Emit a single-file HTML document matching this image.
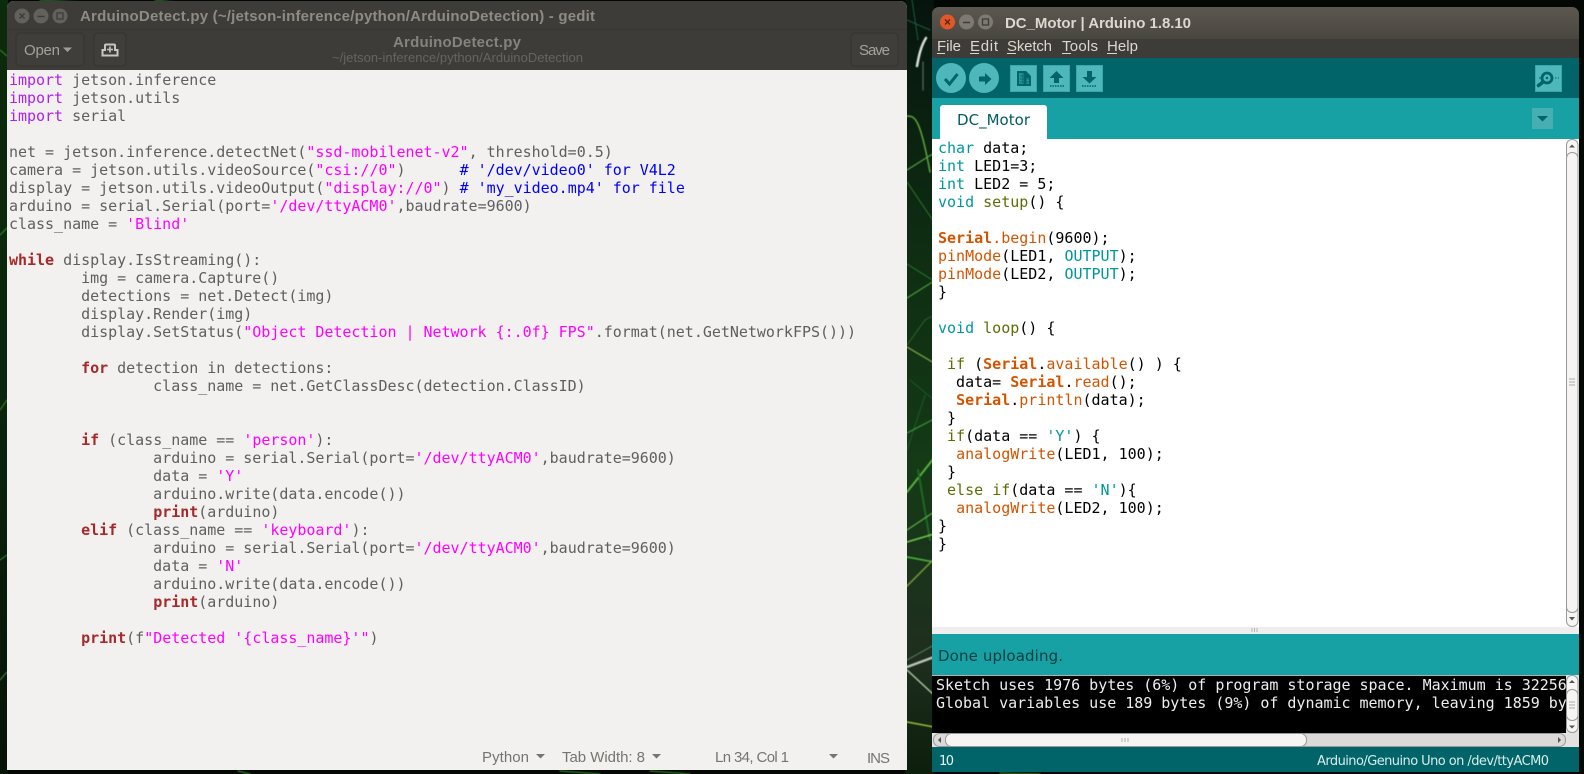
<!DOCTYPE html>
<html><head><meta charset="utf-8"><style>
html,body{margin:0;padding:0;width:1584px;height:774px;overflow:hidden;background:#050a06}
div,pre,svg{position:absolute}
pre{margin:0;font:15px/18px "DejaVu Sans Mono",monospace;white-space:pre}
#py{left:9px;top:71px;color:#5f5f5f;letter-spacing:-.02px}
#py .k{color:#a52a2a;font-weight:bold}
#py .i{color:#b020f0}
#py .s{color:#ff00ff}
#py .c{color:#0000ff}
#ino{left:938px;top:139px;color:#000}
#ino .t{color:#00979c}
#ino .f{color:#5e6d03}
#ino .o{color:#d35400}
#ino .b{color:#d35400;font-weight:bold}
#ino .s{color:#00979c}
</style></head><body>
<svg style="left:0;top:0" width="1584" height="774" viewBox="0 0 1584 774">
<defs>
<linearGradient id="bg" x1="0" y1="0" x2="0" y2="1"><stop offset="0" stop-color="#06140e"/><stop offset=".3" stop-color="#0e2c12"/><stop offset=".6" stop-color="#143a16"/><stop offset=".85" stop-color="#1f2e1f"/><stop offset="1" stop-color="#0c1e0c"/></linearGradient>
<linearGradient id="lb" x1="0" y1="0" x2="0" y2="1"><stop offset="0" stop-color="#0c2a0c"/><stop offset=".5" stop-color="#0a260c"/><stop offset="1" stop-color="#061406"/></linearGradient>
<filter id="soft" x="-10%" y="-10%" width="120%" height="120%"><feGaussianBlur stdDeviation=".6"/></filter>
</defs>
<rect width="1584" height="774" fill="#040804"/>
<rect x="0" width="8" height="774" fill="url(#lb)"/>
<rect x="905" width="29" height="774" fill="url(#bg)"/>
<g fill="none" stroke-linecap="round" filter="url(#soft)">
<path d="M917 66C919 55 921 46 926 38" stroke="#d8e0d8" stroke-width="2.5"/>
<path d="M923 90V62" stroke="#46604e" stroke-width="1.5"/>
<path d="M907 20L930 30M912 0L918 40" stroke="#1f5a3a" stroke-width="1"/>
<path d="M907 116C915 116 920 118 930 172" stroke="#5fa83e" stroke-width="1.5"/>
<path d="M907 170L934 153" stroke="#58a040" stroke-width="1.2"/>
<path d="M907 182L934 222" stroke="#2e7a2a" stroke-width="1"/>
<path d="M907 264L934 281" stroke="#2f7a2a" stroke-width="1"/>
<path d="M907 298L934 281" stroke="#4c9c38" stroke-width="1.2"/>
<path d="M907 345L925 320L934 315" stroke="#2a6a26" stroke-width="1"/>
<path d="M907 347L934 363" stroke="#8ca848" stroke-width="1.2"/>
<path d="M910 380L934 400M907 450L925 395" stroke="#1f5a28" stroke-width="1"/>
<path d="M907 433L934 419" stroke="#3d9a38" stroke-width="1.2"/>
<path d="M907 492L934 458" stroke="#56b040" stroke-width="2"/>
<path d="M918 470L930 540" stroke="#1f6a24" stroke-width="2"/>
<path d="M907 530L934 512" stroke="#58b040" stroke-width="1.2"/>
<path d="M907 542L934 534" stroke="#6cc850" stroke-width="1.6"/>
<path d="M907 557L934 562" stroke="#4cb83c" stroke-width="1.6"/>
<path d="M907 586L934 559" stroke="#7c9c3c" stroke-width="1.5"/>
<path d="M907 660L934 645" stroke="#5a8a6a" stroke-width="1"/>
<path d="M907 667L934 657" stroke="#b8c6b8" stroke-width="2.5"/>
<path d="M907 670L934 695" stroke="#a8d0a0" stroke-width="1.4"/>
<path d="M907 722L934 727" stroke="#90c030" stroke-width="1.6"/>
<path d="M0 50L7 56M0 235L7 228M0 410L7 400M0 560L7 555M0 680L7 672" stroke="#3a8a30" stroke-width="1"/>
<path d="M40 0L90 3M155 0L180 3M560 771L600 774M650 771L690 774M238 771L250 774M1000 773L1040 774" stroke="#2a7a20" stroke-width="1.2"/>
</g>
<!-- gedit window -->
<path d="M7 770V8a7 7 0 0 1 7-7H900a7 7 0 0 1 7 7V770z" fill="#f2f1f0"/>
<path d="M7 70V8a7 7 0 0 1 7-7H900a7 7 0 0 1 7 7V70z" fill="#3e3c38"/>
<path d="M7 29.5H907" stroke="#383632" stroke-width="1"/>
<circle cx="22" cy="16" r="7.5" fill="#63615c"/><circle cx="41" cy="16" r="7.5" fill="#63615c"/><circle cx="60" cy="16" r="7.5" fill="#63615c"/>
<path d="M19.5 13.5l5 5m0-5l-5 5" stroke="#3e3c38" stroke-width="1.3"/>
<path d="M37.5 16.5h7" stroke="#3e3c38" stroke-width="1.5"/>
<rect x="57" y="13" width="6" height="6" fill="none" stroke="#3e3c38" stroke-width="1.3"/>
<rect x="16" y="33" width="68" height="33" rx="4" fill="#403e3a" stroke="#353330"/>
<rect x="94" y="33" width="32" height="33" rx="4" fill="#403e3a" stroke="#353330"/>
<rect x="851" y="33" width="47" height="33" rx="4" fill="#403e3a" stroke="#353330"/>
<path d="M63 47.5h9l-4.5 4.5z" fill="#a09d96"/>
<path d="M106 44.5h8a1 1 0 0 1 1 1V50h2.5v5.5h-15V50H105v-4.5a1 1 0 0 1 1-1z" fill="none" stroke="#c9c6bf" stroke-width="2"/>
<path d="M110 46.5v6M107 49.5h6" stroke="#c9c6bf" stroke-width="1.6"/>
<g font-family="'Liberation Sans',sans-serif">
<text x="80" y="21" font-size="15" font-weight="bold" fill="#8e8b84" textLength="515" lengthAdjust="spacing">ArduinoDetect.py (~/jetson-inference/python/ArduinoDetection) - gedit</text>
<text x="24" y="55" font-size="15" fill="#a5a29b" textLength="36">Open</text>
<text x="393" y="47" font-size="15" font-weight="bold" fill="#86837c" textLength="128">ArduinoDetect.py</text>
<text x="332" y="62" font-size="13" fill="#66645e" textLength="251">~/jetson-inference/python/ArduinoDetection</text>
<text x="859" y="55" font-size="15" fill="#a5a29b" textLength="31">Save</text>
<g font-size="15" fill="#77746e">
<text x="482" y="762" textLength="47">Python</text>
<text x="562" y="762" textLength="83">Tab Width: 8</text>
<text x="715" y="762" textLength="74">Ln 34, Col 1</text>
<text x="867" y="763" textLength="23">INS</text>
</g>
</g>
<path d="M536 754h9l-4.5 4.5zM652 754h9l-4.5 4.5zM829 754h9l-4.5 4.5z" fill="#77746e"/>
<!-- arduino window -->
<linearGradient id="tb" x1="0" y1="0" x2="0" y2="1"><stop offset="0" stop-color="#5c584f"/><stop offset="1" stop-color="#3e3c38"/></linearGradient>
<path d="M932 58V14a7 7 0 0 1 7-7H1572a7 7 0 0 1 7 7V58z" fill="url(#tb)"/>
<rect x="932" y="39" width="647" height="19" fill="#3e3c38"/>
<circle cx="947.5" cy="22" r="7.5" fill="#e2572a"/><circle cx="966.5" cy="22" r="7.5" fill="#7d7a73"/><circle cx="985.5" cy="22" r="7.5" fill="#7d7a73"/>
<path d="M945 19.5l5 5m0-5l-5 5" stroke="#5a2410" stroke-width="1.3"/>
<path d="M963 22.5h7" stroke="#3e3c38" stroke-width="1.5"/>
<rect x="982.5" y="19" width="6" height="6" fill="none" stroke="#3e3c38" stroke-width="1.3"/>
<rect x="932" y="58" width="647" height="40" fill="#006468"/>
<rect x="932" y="98" width="647" height="41" fill="#17a1a5"/>
<rect x="932" y="139" width="647" height="488" fill="#fff"/>
<rect x="932" y="627" width="647" height="7" fill="#eeeeee"/>
<rect x="932" y="634" width="647" height="41" fill="#17a1a5"/>
<rect x="932" y="675" width="647" height="58" fill="#000"/>
<rect x="932" y="675" width="634" height="1" fill="#b0b0b0"/>
<rect x="932" y="733" width="647" height="14" fill="#e4e2e0"/>
<rect x="932" y="747" width="647" height="25" fill="#006468"/>
<path d="M1252 628v4M1254.5 628v4M1257 628v4" stroke="#b5b5b5"/>
<!-- toolbar icons -->
<circle cx="951" cy="78" r="15" fill="#4db7bb"/><circle cx="984" cy="78" r="15" fill="#4db7bb"/>
<path d="M945 79l4.5 5 8-10" fill="none" stroke="#006468" stroke-width="3"/>
<path d="M979 76.500h6V73l6.500 6-6.500 6v-3.500h-6z" fill="#006468"/>
<g fill="#4db7bb" stroke="#3aa7ab"><rect x="1010.5" y="65.5" width="26" height="26"/><rect x="1043.5" y="65.5" width="26" height="26"/><rect x="1076.5" y="65.5" width="26" height="26"/><rect x="1535.5" y="65.5" width="26" height="26"/></g>
<path d="M1017 71h9l5 5v10h-14z" fill="#006468"/>
<path d="M1019 73h5v11h-5zM1026 78h3v6h-3z" fill="#4db7bb" opacity=".55"/>
<path d="M1020 76h4M1020 79h9M1020 82h9M1023 73v11M1026 77v7" stroke="#006468" stroke-width=".8"/>
<path d="M1056.5 71l7 7h-4.500v5h-5v-5h-4.500z" fill="#006468"/>
<path d="M1050 86h14" stroke="#006468" stroke-width="1.5" stroke-dasharray="1.5 1"/>
<path d="M1087 71h5v6h4.500l-7 6.500-7-6.500h4.500z" fill="#006468"/>
<path d="M1082 86h14" stroke="#006468" stroke-width="1.5" stroke-dasharray="1.5 1"/>
<circle cx="1547" cy="78" r="5" fill="none" stroke="#006468" stroke-width="2.8"/><circle cx="1547" cy="78" r="1.2" fill="#006468"/>
<path d="M1543 82l-4.5 3.500" stroke="#006468" stroke-width="3.5" stroke-linecap="round"/>
<path d="M1539 78h2M1555 78h1.5M1558 78h1" stroke="#006468"/>
<path d="M940 139v-31a3 3 0 0 1 3-3h101a3 3 0 0 1 3 3v31z" fill="#fff"/>
<rect x="1532" y="108" width="21" height="21" fill="#45afb3"/>
<path d="M1537 116h11l-5.500 5.500z" fill="#006468"/>
<!-- editor scrollbar -->
<g fill="#f6f5f4" stroke="#9a9a9a">
<rect x="1566.5" y="139.5" width="11.5" height="24" rx="5.5"/>
<rect x="1566.5" y="602.5" width="11.5" height="24" rx="5.5"/>
<rect x="1566.5" y="152.5" width="11.5" height="460" rx="5.5"/>
</g>
<path d="M1569 147.5h6l-3-3zM1569 617h6l-3 3.5z" fill="#555"/>
<path d="M1569 379h6M1569 382h6M1569 385h6" stroke="#aaa"/>
<!-- console scrollbars -->
<rect x="1566" y="675" width="13" height="58" fill="#e4e2e0"/>
<g fill="#f6f5f4" stroke="#9a9a9a">
<rect x="1566.5" y="675.5" width="11.5" height="57" rx="5.5"/>
<rect x="1566.5" y="689.5" width="11.5" height="31" rx="5.5"/>
<rect x="933.5" y="733.5" width="632" height="13" rx="6" fill="#dcdad8"/>
<rect x="945.5" y="733.5" width="361" height="13" rx="6"/>
</g>
<path d="M1569 683h6l-3-3zM1569 725.5h6l-3 3zM941 737v6l-3-3zM1558 737v6l3-3z" fill="#555"/>
<path d="M1122 738v4M1125 738v4M1128 738v4M1569 702h6M1569 705h6M1569 708h6" stroke="#aaa"/>
<g font-family="'DejaVu Sans',sans-serif">
<text x="957" y="125" font-size="15" fill="#005c5f" textLength="73">DC_Motor</text>
<text x="938" y="661" font-size="15" fill="#003f42" textLength="125">Done uploading.</text>
<text x="939" y="765" font-size="13" fill="#e8f4f4" textLength="15">10</text>
<text x="1317" y="765" font-size="13" fill="#d8ecec" textLength="232">Arduino/Genuino Uno on /dev/ttyACM0</text>
</g>
<g font-family="'Liberation Sans',sans-serif">
<text x="1005" y="28" font-size="15" font-weight="bold" fill="#dcd8cf" textLength="186">DC_Motor | Arduino 1.8.10</text>
<g font-size="15" fill="#dcd8cf">
<text x="937" y="51" textLength="24">File</text>
<text x="970" y="51" textLength="28">Edit</text>
<text x="1007" y="51" textLength="45">Sketch</text>
<text x="1062" y="51" textLength="36">Tools</text>
<text x="1107" y="51" textLength="31">Help</text>
</g>
</g>
<path d="M937 53.5h8M970 53.5h9M1007 53.5h9M1062 53.5h9M1107 53.5h10" stroke="#dcd8cf"/>
</svg>
<pre id="py"><span class="i">import</span> jetson.inference
<span class="i">import</span> jetson.utils
<span class="i">import</span> serial

net = jetson.inference.detectNet(<span class="s">"ssd-mobilenet-v2"</span>, threshold=0.5)
camera = jetson.utils.videoSource(<span class="s">"csi://0"</span>)      <span class="c"># '/dev/video0' for V4L2</span>
display = jetson.utils.videoOutput(<span class="s">"display://0"</span>) <span class="c"># 'my_video.mp4' for file</span>
arduino = serial.Serial(port=<span class="s">'/dev/ttyACM0'</span>,baudrate=9600)
class_name = <span class="s">'Blind'</span>

<span class="k">while</span> display.IsStreaming():
        img = camera.Capture()
        detections = net.Detect(img)
        display.Render(img)
        display.SetStatus(<span class="s">"Object Detection | Network {:.0f} FPS"</span>.format(net.GetNetworkFPS()))

        <span class="k">for</span> detection in detections:
                class_name = net.GetClassDesc(detection.ClassID)


        <span class="k">if</span> (class_name == <span class="s">'person'</span>):
                arduino = serial.Serial(port=<span class="s">'/dev/ttyACM0'</span>,baudrate=9600)
                data = <span class="s">'Y'</span>
                arduino.write(data.encode())
                <span class="k">print</span>(arduino)
        <span class="k">elif</span> (class_name == <span class="s">'keyboard'</span>):
                arduino = serial.Serial(port=<span class="s">'/dev/ttyACM0'</span>,baudrate=9600)
                data = <span class="s">'N'</span>
                arduino.write(data.encode())
                <span class="k">print</span>(arduino)

        <span class="k">print</span>(f<span class="s">"Detected '{class_name}'"</span>)</pre>
<pre id="ino"><span class="t">char</span> data;
<span class="t">int</span> LED1=3;
<span class="t">int</span> LED2 = 5;
<span class="t">void</span> <span class="f">setup</span>() {

<span class="b">Serial</span><span class="o">.begin</span>(9600);
<span class="o">pinMode</span>(LED1, <span class="t">OUTPUT</span>);
<span class="o">pinMode</span>(LED2, <span class="t">OUTPUT</span>);
}

<span class="t">void</span> <span class="f">loop</span>() {

 <span class="f">if</span> (<span class="b">Serial</span>.<span class="o">available</span>() ) {
  data= <span class="b">Serial</span>.<span class="o">read</span>();
  <span class="b">Serial</span>.<span class="o">println</span>(data);
 }
 <span class="f">if</span>(data == <span class="s">'Y'</span>) {
  <span class="o">analogWrite</span>(LED1, 100);
 }
 <span class="f">else</span> <span class="f">if</span>(data == <span class="s">'N'</span>){
  <span class="o">analogWrite</span>(LED2, 100);
}
}</pre>
<div style="left:936px;top:676px;width:630px;height:56px;overflow:hidden"><pre style="left:0;top:0;color:#eee;letter-spacing:-.02px">Sketch uses 1976 bytes (6%) of program storage space. Maximum is 32256 bytes.
Global variables use 189 bytes (9%) of dynamic memory, leaving 1859 bytes for local variables.</pre></div>
</body></html>
